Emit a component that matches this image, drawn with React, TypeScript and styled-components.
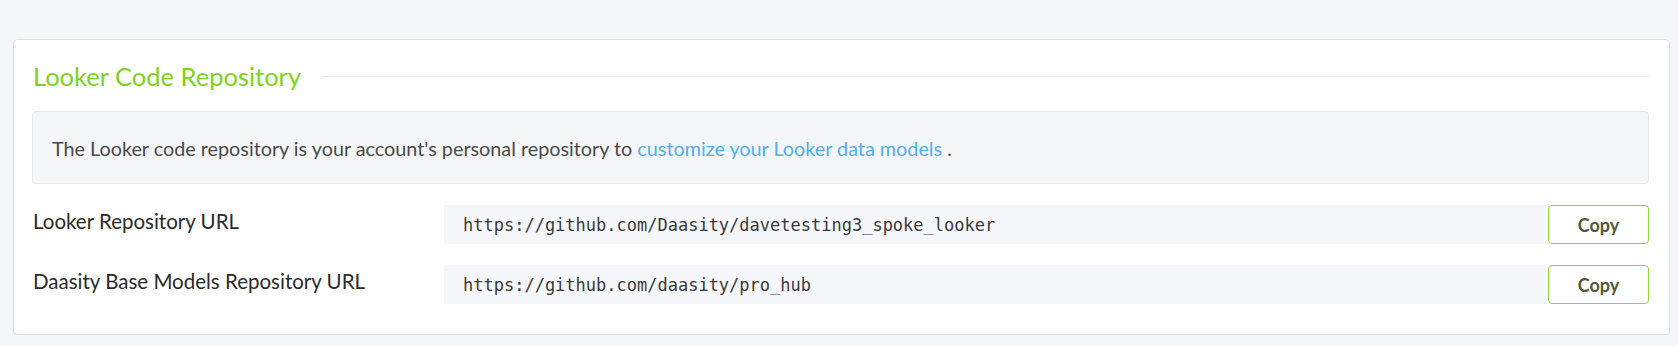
import * as React from 'react';
import styled, { createGlobalStyle } from 'styled-components';

const GlobalStyle = createGlobalStyle`
  body {
    margin: 0;
    background: #f4f7f8;
    font-family: Lato, "Liberation Sans", sans-serif;
    color: #333;
  }
`;

const Card = styled.section`
  margin: 39px 8px 0 13px;
  background: #fff;
  border: 1px solid #dfe1e3;
  border-radius: 5px;
  box-shadow: 0 1px 2px rgba(0, 0, 0, 0.06);
  padding: 21px 20px 30px 18px;
`;

const TitleRow = styled.div`
  display: flex;
  align-items: center;
  gap: 21px;
`;

const Title = styled.h2`
  margin: 0 0 0 1px;
  font-size: 25.5px;
  line-height: 30px;
  font-weight: 400;
  color: #7ed321;
  white-space: nowrap;
`;

const Rule = styled.div`
  flex: 1;
  height: 1px;
  background: #e6e8ea;
`;

const InfoBox = styled.div`
  margin-top: 20px;
  height: 73px;
  box-sizing: border-box;
  display: flex;
  align-items: center;
  padding: 0 19px;
  background: #f5f6f8;
  border: 1px solid #e7e9ec;
  border-radius: 4px;
  font-size: 19.8px;
  color: #4a4a4a;
`;

const Link = styled.a`
  color: #52aef5;
  text-decoration: none;
`;

const Rows = styled.div`
  margin-top: 21px;
  display: flex;
  flex-direction: column;
  gap: 21px;
`;

const Row = styled.div`
  display: grid;
  grid-template-columns: 410px 1fr 101px;
  column-gap: 2px;
  align-items: stretch;
  height: 39px;
`;

const Label = styled.div`
  display: flex;
  align-items: center;
  padding-left: 1px;
  margin-top: -7px;
  font-size: 20.5px;
  color: #2b2b2b;
`;

const UrlBox = styled.div`
  display: flex;
  align-items: center;
  padding-left: 19px;
  background: #f5f7fa;
  font-family: "DejaVu Sans Mono", "Liberation Mono", monospace;
  font-size: 17px;
  color: #3a3a3a;
`;

const CopyButton = styled.button`
  box-sizing: border-box;
  border: 1.5px solid #8cd33c;
  border-radius: 4px;
  background: #fff;
  font-family: Lato, "Liberation Sans", sans-serif;
  font-size: 18px;
  font-weight: 700;
  color: #4f5b3a;
  cursor: pointer;
`;

const repos = [
  { label: 'Looker Repository URL', url: 'https://github.com/Daasity/davetesting3_spoke_looker' },
  { label: 'Daasity Base Models Repository URL', url: 'https://github.com/daasity/pro_hub' },
];

export default function App() {
  return (
    <>
      <GlobalStyle />
      <Card>
        <TitleRow>
          <Title>Looker Code Repository</Title>
          <Rule />
        </TitleRow>
        <InfoBox>
          <span>
            The Looker code repository is your account's personal repository to{' '}
            <Link href="#">customize your Looker data models</Link> .
          </span>
        </InfoBox>
        <Rows>
          {repos.map(r => (
            <Row key={r.url}>
              <Label>{r.label}</Label>
              <UrlBox>{r.url}</UrlBox>
              <CopyButton type="button">Copy</CopyButton>
            </Row>
          ))}
        </Rows>
      </Card>
    </>
  );
}
